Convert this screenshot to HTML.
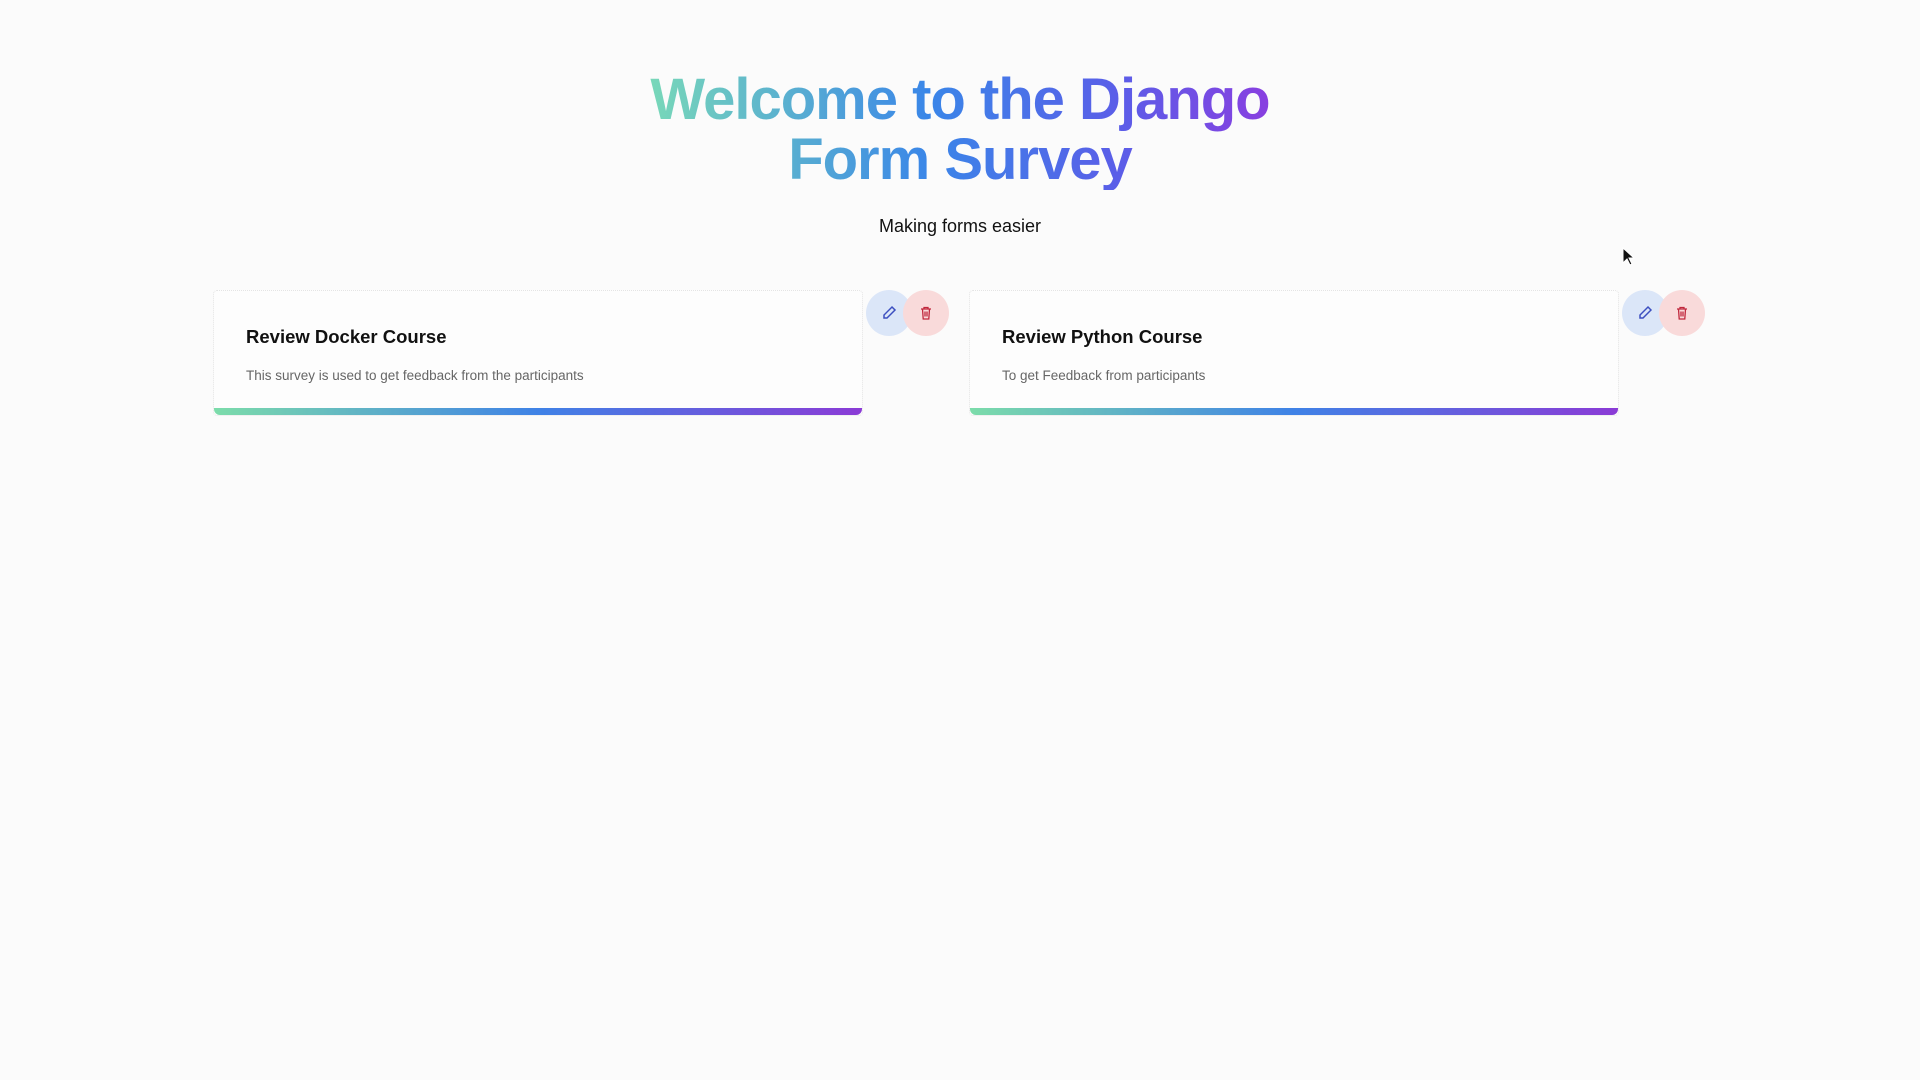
<!DOCTYPE html>
<html><head><meta charset="utf-8"><style>
html,body{margin:0;padding:0;width:1920px;height:1080px;background:#fbfbfb;font-family:"Liberation Sans",sans-serif;overflow:hidden}
h1{position:absolute;left:0;width:1920px;top:70px;margin:0;text-align:center;font-size:58px;line-height:60px;font-weight:bold;letter-spacing:-1px}
h1 span{background:linear-gradient(90deg,#79d9b8 0%,#3a86e8 45%,#5a5ee8 75%,#8a3ee0 100%);-webkit-background-clip:text;background-clip:text;color:transparent;display:inline-block;padding:0 4px}
.sub{position:absolute;left:0;width:1920px;top:216px;text-align:center;font-size:18px;color:#111}
.card{position:absolute;top:290px;width:650px;height:126px;background:#fdfdfd;border:1px dotted #e4e4e4;border-radius:4px;box-sizing:border-box}
.card .bar{position:absolute;left:0;right:0;bottom:0;height:7px;border-radius:0 0 6px 6px;background:linear-gradient(90deg,#7cdcaa,#3f82e6 50%,#8b3bd6)}
.card h3{position:absolute;left:32px;top:35px;margin:0;font-size:18.5px;color:#111}
.card p{position:absolute;left:32px;top:77px;margin:0;font-size:13.5px;color:#666}
.btn{position:absolute;top:290px;width:46px;height:46px;border-radius:50%;display:flex;align-items:center;justify-content:center}
.e{background:#dbe6f8}.d{background:#f9dada}
</style></head><body>
<h1><span>Welcome to the Django<br>Form Survey</span></h1>
<div class="sub">Making forms easier</div>
<div class="card" style="left:213px"><h3>Review Docker Course</h3><p>This survey is used to get feedback from the participants</p><div class="bar"></div></div>
<div class="card" style="left:969px"><h3>Review Python Course</h3><p>To get Feedback from participants</p><div class="bar"></div></div>
<div class="btn e" style="left:866px"><svg width="16" height="16" viewBox="0 0 16 16" fill="none" stroke="#3c4fc0" stroke-width="1.5"><path d="M11 2l3 3-8 8H3v-3z"/></svg></div>
<div class="btn d" style="left:903px"><svg width="16" height="16" viewBox="0 0 16 16" fill="none" stroke="#c0273c" stroke-width="1.3"><path d="M3 4h10M6 4V2.5h4V4M4.5 4l.7 10h5.6l.7-10M7 6.5v5M9 6.5v5"/></svg></div>
<div class="btn e" style="left:1622px"><svg width="16" height="16" viewBox="0 0 16 16" fill="none" stroke="#3c4fc0" stroke-width="1.5"><path d="M11 2l3 3-8 8H3v-3z"/></svg></div>
<div class="btn d" style="left:1659px"><svg width="16" height="16" viewBox="0 0 16 16" fill="none" stroke="#c0273c" stroke-width="1.3"><path d="M3 4h10M6 4V2.5h4V4M4.5 4l.7 10h5.6l.7-10M7 6.5v5M9 6.5v5"/></svg></div>
<svg style="position:absolute;left:1622px;top:247px" width="14" height="20" viewBox="0 0 14 20"><path d="M1 1v15l4-4 3 6 2-1-3-6h5z" fill="#111" stroke="#fff" stroke-width="1"/></svg>
</body></html>
